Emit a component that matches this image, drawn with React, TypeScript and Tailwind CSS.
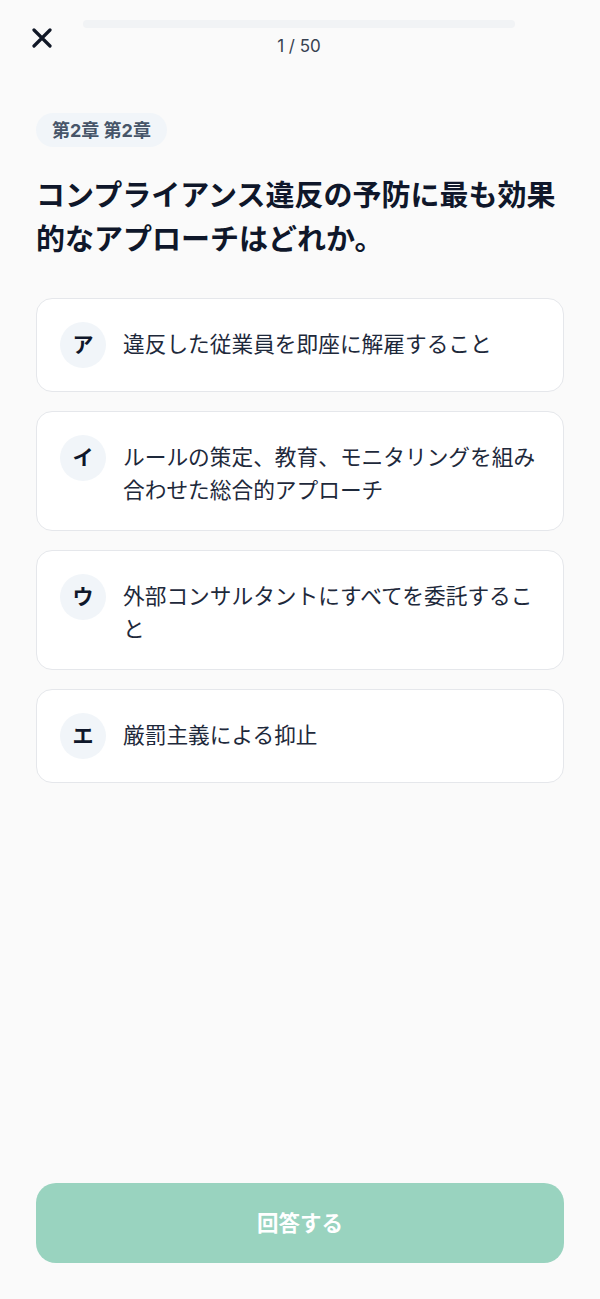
const font = { fontFamily: '"Inter", "Noto Sans CJK JP", sans-serif' };

const options = [
  { key: "ア", text: "違反した従業員を即座に解雇すること" },
  { key: "イ", text: "ルールの策定、教育、モニタリングを組み合わせた総合的アプローチ" },
  { key: "ウ", text: "外部コンサルタントにすべてを委託すること" },
  { key: "エ", text: "厳罰主義による抑止" },
];

function CloseIcon() {
  return (
    <svg width="20" height="20" viewBox="0 0 20 20" fill="none">
      <path
        d="M2 2L18 18M18 2L2 18"
        stroke="#111827"
        strokeWidth="3.2"
        strokeLinecap="round"
      />
    </svg>
  );
}

function OptionCard({ label, text }: { label: string; text: string }) {
  return (
    <button className="flex w-full items-start rounded-2xl border border-[#e5e7eb] bg-white p-[23px] text-left">
      <div className="flex h-[46px] w-[46px] shrink-0 items-center justify-center rounded-full bg-[#f1f5f9] text-[21px] font-bold text-[#0f172a]">
        {label}
      </div>
      <p className="ml-[17px] pt-[6px] text-[21.7px] leading-[33px] text-[#1e293b]">
        {text}
      </p>
    </button>
  );
}

export default function App() {
  return (
    <div className="flex min-h-screen flex-col bg-[#fafafa]" style={font}>
      {/* Header */}
      <header className="flex pt-[20px]">
        <div className="w-[83px] shrink-0 pl-[32px] pt-[8px]">
          <CloseIcon />
        </div>
        <div className="flex flex-1 flex-col items-center">
          <div className="h-2 w-full rounded-full bg-[#f1f3f5]" />
          <span className="mt-[6px] text-[17px] leading-[24px] text-[#374151]">
            1 / 50
          </span>
        </div>
        <div className="w-[85px] shrink-0" />
      </header>

      <main className="px-[36px]">
        <div className="mt-[55px] inline-flex h-[34px] items-center rounded-full bg-[#f1f5f9] px-[16px] text-[18px] font-bold text-[#475569]">
          第2章 第2章
        </div>

        <h1 className="mt-[27px] text-[29px] font-bold leading-[44px] text-[#0f172a]">
          コンプライアンス違反の予防に最も効果的なアプローチはどれか。
        </h1>

        <div className="mt-[36px] flex flex-col gap-[19px]">
          {options.map((o) => (
            <OptionCard key={o.key} label={o.key} text={o.text} />
          ))}
        </div>
      </main>

      <div className="mt-auto px-[36px] pb-[36px]">
        <button
          disabled
          className="flex h-[80px] w-full items-center justify-center rounded-[20px] bg-[#99d3bf] text-[21.5px] font-bold text-white"
        >
          回答する
        </button>
      </div>
    </div>
  );
}
